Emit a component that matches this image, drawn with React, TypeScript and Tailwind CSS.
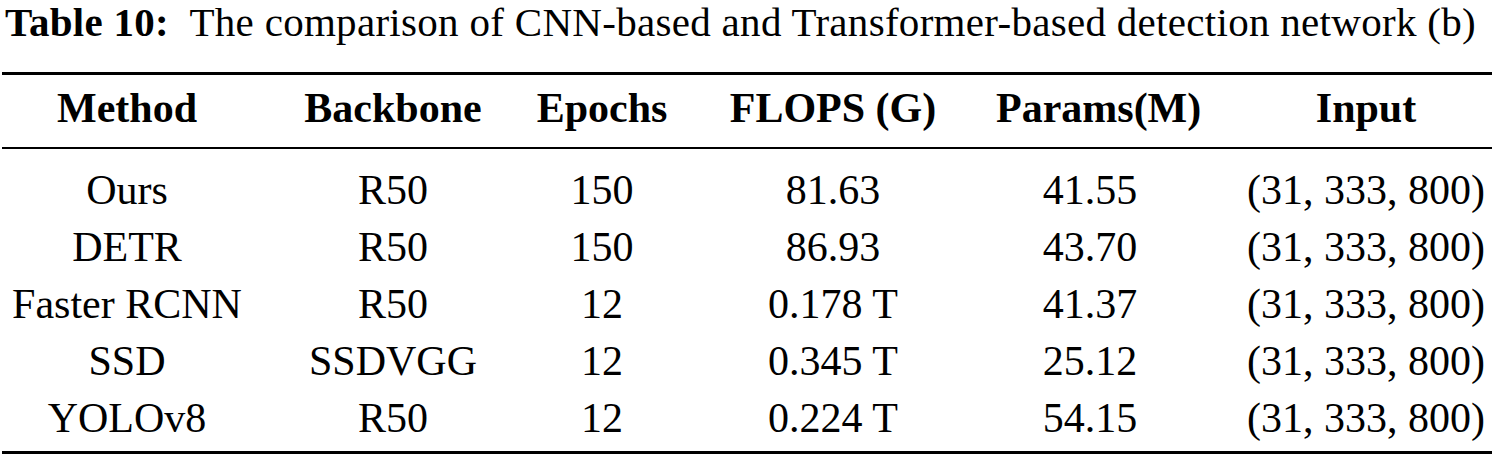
const cols = ['Method', 'Backbone', 'Epochs', 'FLOPS (G)', 'Params(M)', 'Input'];

const rows = [
  ['Ours', 'R50', '150', '81.63', '41.55', '(31, 333, 800)'],
  ['DETR', 'R50', '150', '86.93', '43.70', '(31, 333, 800)'],
  ['Faster RCNN', 'R50', '12', '0.178 T', '41.37', '(31, 333, 800)'],
  ['SSD', 'SSDVGG', '12', '0.345 T', '25.12', '(31, 333, 800)'],
  ['YOLOv8', 'R50', '12', '0.224 T', '54.15', '(31, 333, 800)'],
];

// fixed widths so each column centre lands where the typeset table has it
const grid = 'grid grid-cols-[250px_282px_136px_326px_188px_308px] text-center';

export default function App() {
  return (
    <div className="w-[1492px] h-[457px] bg-white text-black font-['Liberation_Serif',serif] overflow-hidden">
      {/* Caption */}
      <p className="pl-[5px] text-[41px] leading-[44px] tracking-[0.3px] whitespace-nowrap">
        <span className="font-bold">Table 10:</span>&nbsp; The comparison of CNN-based and Transformer-based detection network (b)
      </p>

      {/* Table */}
      <div className="mt-[28px] ml-[2px] border-t-[3px] border-black text-[42px] leading-[57px]">
        <div className={`${grid} pt-[5px] pb-[10px] font-bold`}>
          {cols.map((c, i) => (
            <div key={c} className={i === 5 ? 'pl-[56px] whitespace-nowrap' : 'whitespace-nowrap'}>{c}</div>
          ))}
        </div>
        <div className="border-t-2 border-black pt-[13px] pb-[4px] border-b-[3px]">
          {rows.map((r) => (
            <div key={r[0]} className={grid}>
              {r.map((v, i) => (
                <div key={i} className={i === 5 ? 'pl-[56px] whitespace-nowrap' : 'whitespace-nowrap'}>{v}</div>
              ))}
            </div>
          ))}
        </div>
      </div>
    </div>
  );
}
